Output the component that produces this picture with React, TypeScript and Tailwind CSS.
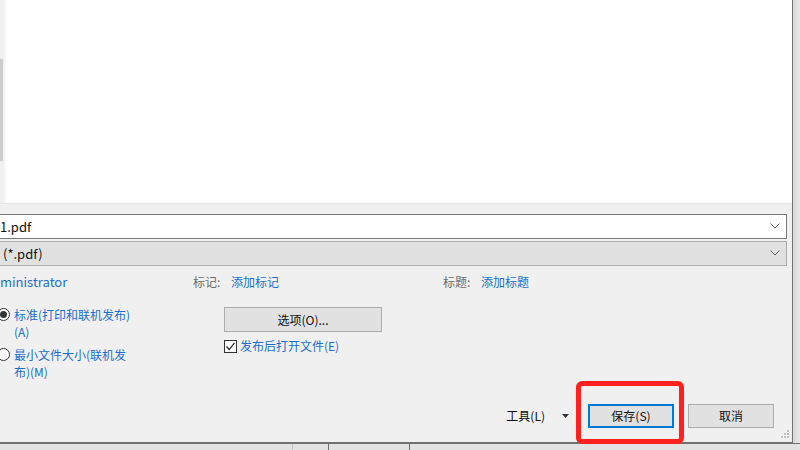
import React from 'react';

const Chevron = () => (
  <svg width="10" height="6" viewBox="0 0 10 6" className="shrink-0">
    <path d="M0.5 0.5 L5 5 L9.5 0.5" fill="none" stroke="#5f5f5f" strokeWidth="1" />
  </svg>
);

const Radio = ({ checked }: { checked?: boolean }) => (
  <span className="-ml-[3px] mt-[2px] flex h-[13px] w-[13px] shrink-0 items-center justify-center rounded-full border border-[#333] bg-white">
    {checked && <span className="h-[7px] w-[7px] rounded-full bg-[#333]" />}
  </span>
);

const GripDots = () => {
  const dots = [
    [6, 0],
    [3, 3],
    [6, 3],
    [0, 6],
    [3, 6],
    [6, 6],
  ];
  return (
    <svg width="8" height="8" viewBox="0 0 8 8" className="absolute bottom-[4px] right-[3px]">
      {dots.map(([x, y]) => (
        <rect key={`${x}-${y}`} x={x} y={y} width="2" height="2" fill="#c2c2c2" />
      ))}
    </svg>
  );
};

export default function App() {
  return (
    <div className="relative flex h-[450px] w-[800px] flex-col overflow-hidden bg-[#e4e4e4] font-['Noto_Sans_CJK_SC','Microsoft_YaHei',sans-serif] text-[12px] leading-[17px]">
      <div className="flex h-[443px]">
        {/* dialog */}
        <div className="relative flex h-[443px] w-[793px] flex-col border-b border-r border-[#6f6f6f] bg-[#f0f0f0]">
          {/* file list pane */}
          <div className="flex h-[204px] border-b border-[#e6e6e6]">
            <div className="w-[4px] bg-[#f0f0f0]">
              <div className="mt-[59px] h-[102px] w-[3px] bg-[#cdcdcd]" />
            </div>
            <div className="w-[2px] bg-[#f7f7f7]" />
            <div className="flex-1 bg-white" />
          </div>

          {/* file name */}
          <div className="mt-[10px] flex h-[25px] w-[787px] items-center justify-between border border-l-0 border-[#7a7a7a] bg-white pb-[1px] pr-[6px] text-[#111]">
            <span className="text-[13px]">1.pdf</span>
            <Chevron />
          </div>

          {/* save as type */}
          <div className="mt-[2px] flex h-[25px] w-[787px] items-center justify-between border border-l-0 border-[#adadad] bg-[#e1e1e1] pb-[1px] pl-[3px] pr-[6px] text-[#111]">
            <span className="text-[13px]">(*.pdf)</span>
            <Chevron />
          </div>

          {/* meta row */}
          <div className="mt-[7px] flex h-[16px] items-center">
            <div className="w-[193px] text-[13px] text-[#1a6fce]">ministrator</div>
            <div className="flex w-[250px]">
              <span className="w-[38px] text-[#6d6d6d]">标记:</span>
              <span className="text-[#1a6fce]">添加标记</span>
            </div>
            <div className="flex">
              <span className="w-[38px] text-[#6d6d6d]">标题:</span>
              <span className="text-[#1a6fce]">添加标题</span>
            </div>
          </div>

          {/* options */}
          <div className="mt-[18px] flex">
            <div className="-mt-[1px] flex w-[224px] flex-col gap-[6px] text-[#1a6fce]">
              <div className="flex gap-[4px]">
                <Radio checked />
                <span>
                  标准(打印和联机发布)
                  <br />
                  (A)
                </span>
              </div>
              <div className="flex gap-[4px]">
                <Radio />
                <span>
                  最小文件大小(联机发
                  <br />
                  布)(M)
                </span>
              </div>
            </div>
            <div className="flex flex-col">
              <button className="h-[25px] w-[158px] border border-[#adadad] bg-[#e1e1e1] pb-[1px] text-[#111]">
                选项(O)...
              </button>
              <div className="mt-[6px] flex items-center gap-[3px]">
                <span className="flex h-[13px] w-[13px] items-center justify-center border border-[#333] bg-white">
                  <svg width="11" height="11" viewBox="0 0 11 11">
                    <path d="M1.5 5.5 L4.2 8.5 L9.5 1.8" fill="none" stroke="#222" strokeWidth="1.2" />
                  </svg>
                </span>
                <span className="-mt-[1px] text-[#1a6fce]">发布后打开文件(E)</span>
              </div>
            </div>
          </div>

          {/* buttons */}
          <div className="mt-auto flex items-center justify-end pb-[14px] pr-[18px]">
            <span className="-mt-[1px] text-[#111]">工具(L)</span>
            <svg width="7" height="4" viewBox="0 0 7 4" className="ml-[17px]">
              <path d="M0 0 H7 L3.5 4 Z" fill="#333" />
            </svg>
            <button className="ml-[19px] h-[24px] w-[86px] border-2 border-[#0078d7] bg-[#e1e1e1] pb-[1px] text-[#111]">
              保存(S)
            </button>
            <button className="ml-[14px] h-[24px] w-[86px] border border-[#adadad] bg-[#e1e1e1] pb-[1px] text-[#111]">
              取消
            </button>
          </div>
          <GripDots />
        </div>
        <div className="flex-1 bg-gradient-to-r from-[#d9d9d9] to-[#e8e8e8]" />
      </div>

      {/* taskbar strip */}
      <div className="flex h-[7px] border-t border-[#707070] bg-[#e2e2e2]">
        <div className="w-[293px] border-r border-[#c4c4c4]" />
        <div className="w-[36px] border-r border-[#6f6f6f]" />
        <div className="w-[81px] border-r border-[#6f6f6f]" />
      </div>

      {/* red highlight annotation */}
      <div className="absolute left-[576px] top-[381px] h-[63px] w-[108px] rounded-[6px] border-[5px] border-[#ff2020]" />
    </div>
  );
}
